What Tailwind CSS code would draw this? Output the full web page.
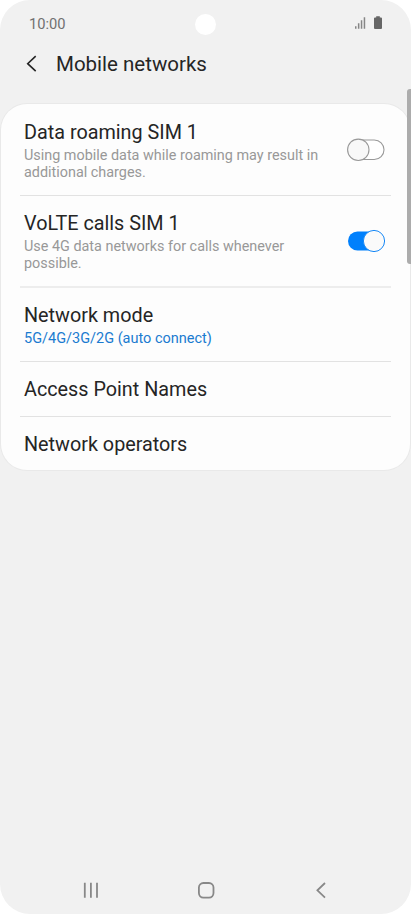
<!DOCTYPE html>
<html lang="en">
<head>
<meta charset="utf-8">
<title>Mobile networks</title>
<script src="https://cdn.jsdelivr.net/npm/@tailwindcss/browser@4"></script>
</head>
<body class="bg-white">
<div class="relative flex h-[914px] w-[411px] flex-col overflow-hidden rounded-[30px] bg-[#f1f1f1] font-['Roboto',sans-serif] text-[#252525]">
  <header class="flex h-[46px] shrink-0 items-center justify-between pr-[28px] pl-[29px]">
    <span class="pt-px text-[14.700px] leading-[18px] text-[#707070]">10:00</span>
    <svg class="h-[14px] w-[30px]" viewBox="0 0 30 14">
      <path d="M2 10.300h1.500v2.500H2zM4.900 7.300h1.500v5.500H4.900zM7.800 4.300h1.500v8.500H7.800zM10.700 1.300h1.500v11.500h-1.500z" fill="#858585"/>
      <path d="M23.200 .3h3.600v1.300h1.200q1 0 1 1v9.300q0 1-1 1h-6q-1 0-1-1V2.600q0-1 1-1h1.200z" fill="#666"/>
    </svg>
  </header>
  <div class="absolute top-[13.500px] left-[194.500px] size-[21px] rounded-full bg-white"></div>
  <div class="flex h-[58px] shrink-0 items-start pt-[6px] pl-[26px]">
    <svg class="mt-[3px] h-[18px] w-[12px]" viewBox="0 0 12 18" fill="none" stroke="#252525" stroke-width="1.600"><path d="M9.700 1.200L1.700 8.700L9.700 16.200"/></svg>
    <h1 class="ml-[18px] text-[20.500px] leading-[25px]">Mobile networks</h1>
  </div>
  <main class="mx-px flex h-[366px] shrink-0 flex-col rounded-[26px] bg-[#fdfdfd] px-[19px] ring-1 ring-[#e9e9e9]">
    <section class="flex h-[92px] justify-between border-b border-[#e2e2e2] pr-[5.500px] pl-[4px]">
      <div class="pt-[16px]">
        <h2 class="text-[19.800px] leading-[26px]">Data roaming SIM 1</h2>
        <p class="mt-[2px] text-[14.400px] leading-[16.700px] text-[#989898]">Using mobile data while roaming may result in<br>additional charges.</p>
      </div>
      <svg class="mt-[33.500px] h-[24px] w-[40px] shrink-0" viewBox="0 0 40 24" stroke="#999" stroke-width="1.100"><rect x="2" y="2" width="36" height="19.500" rx="9.750" fill="#fff"/><circle cx="12.300" cy="11.800" r="10.700" fill="#f8f8f8"/></svg>
    </section>
    <section class="flex h-[92px] justify-between border-b-2 border-[#ededed] pr-[5.500px] pl-[4px]">
      <div class="pt-[15px]">
        <h2 class="text-[19.800px] leading-[26px]">VoLTE calls SIM 1</h2>
        <p class="mt-[2px] text-[14.400px] leading-[16.700px] text-[#989898]">Use 4G data networks for calls whenever<br>possible.</p>
      </div>
      <svg class="mt-[32.500px] h-[24px] w-[40px] shrink-0" viewBox="0 0 40 24"><rect x="2" y="2.500" width="36" height="19" rx="9.500" fill="#0080fc"/><circle cx="28" cy="12" r="10.600" fill="#fafafa" stroke="#1687f5"/></svg>
    </section>
    <section class="h-[74px] border-b border-[#e2e2e2] pt-[15px] pl-[4px]">
      <h2 class="text-[19.800px] leading-[26px]">Network mode</h2>
      <p class="mt-px text-[14.500px] leading-[17px] text-[#1a7bd0]">5G/4G/3G/2G (auto connect)</p>
    </section>
    <section class="flex h-[55px] items-center border-b border-[#e2e2e2] pt-[2px] pl-[4px]">
      <h2 class="text-[19.800px] leading-[26px]">Access Point Names</h2>
    </section>
    <section class="flex flex-1 items-center pt-[3px] pl-[4px]">
      <h2 class="text-[19.800px] leading-[26px]">Network operators</h2>
    </section>
  </main>
  <div class="absolute top-[89px] right-[-3px] h-[175px] w-[7px] rounded-[3px] bg-[#acacac]"></div>
  <nav class="mt-auto flex h-[48px] shrink-0 items-center justify-between pr-[84px] pl-[82px]">
    <svg class="h-[18px] w-[18px]" viewBox="0 0 18 18" stroke="#888" stroke-width="1.800"><path d="M2.800 1.800v15M8.900 1.800v15M15 1.800v15"/></svg>
    <svg class="h-[18px] w-[18px]" viewBox="0 0 18 18" fill="none" stroke="#888" stroke-width="1.800"><rect x=".9" y="2" width="14.600" height="14.600" rx="4.500"/></svg>
    <svg class="h-[18px] w-[14px]" viewBox="0 0 14 18" fill="none" stroke="#888" stroke-width="1.800"><path d="M12 2L4.400 9.300L12 16.600"/></svg>
  </nav>
</div>
</body>
</html>
